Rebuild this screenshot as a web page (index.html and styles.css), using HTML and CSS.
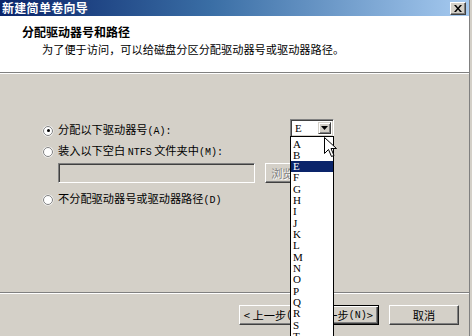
FILE: index.html
```html
<!DOCTYPE html>
<html lang="zh-CN">
<head>
<meta charset="utf-8">
<title>新建简单卷向导</title>
<link rel="stylesheet" href="styles.css">
</head>
<body>
<div class="window">
  <div class="titlebar">
    <span class="title">新建简单卷向导</span>
    <span class="close-btn">
      <svg width="8" height="7" viewBox="0 0 8 7"><path d="M0 0h2l2 2.5L6 0h2L5 3.5 8 7H6L4 4.5 2 7H0l3-3.5z" fill="#000"/></svg>
    </span>
  </div>
  <div class="header">
    <div class="heading">分配驱动器号和路径</div>
    <div class="subtitle">为了便于访问，可以给磁盘分区分配驱动器号或驱动器路径。</div>
  </div>
  <div class="sep"></div>
  <div class="content">
    <div class="options">
      <div class="row">
        <span class="radio checked"></span>
        <span class="label">分配以下驱动器号<span class="latin">(A):</span></span>
        <div class="combo">
          <span class="combo-value">E</span>
          <span class="combo-arrow"><svg width="7" height="4" viewBox="0 0 7 4"><path d="M0 0h7L3.5 4z" fill="#000"/></svg></span>
          <div class="droplist">
            <div class="item">A</div>
            <div class="item">B</div>
            <div class="item selected">E</div>
            <div class="item">F</div>
            <div class="item">G</div>
            <div class="item">H</div>
            <div class="item">I</div>
            <div class="item">J</div>
            <div class="item">K</div>
            <div class="item">L</div>
            <div class="item">M</div>
            <div class="item">N</div>
            <div class="item">O</div>
            <div class="item">P</div>
            <div class="item">Q</div>
            <div class="item">R</div>
            <div class="item">S</div>
            <div class="item">T</div>
          </div>
          <svg class="cursor" width="13" height="22" viewBox="0 0 13 22"><path d="M0.5 0.5v16l4-4 3 7 2.5-1-3-7h5.5z" fill="#fff" stroke="#000" stroke-width="1"/></svg>
        </div>
      </div>
      <div class="row">
        <span class="radio"></span>
        <span class="label">装入以下空白 <span class="latin">NTFS</span> 文件夹中<span class="latin">(M):</span></span>
      </div>
      <div class="field-row">
        <div class="field"></div>
        <div class="btn browse disabled">浏览...</div>
      </div>
      <div class="row row3">
        <span class="radio"></span>
        <span class="label">不分配驱动器号或驱动器路径<span class="latin">(D)</span></span>
      </div>
    </div>
  </div>
  <div class="sep"></div>
  <div class="buttons">
    <div class="btn wide">&lt; 上一步<span class="latin">(B)</span></div>
    <div class="btn wide default">下一步<span class="latin">(N)</span> &gt;</div>
    <div class="btn wide cancel">取消</div>
  </div>
</div>
</body>
</html>
```
FILE: styles.css
```css
html, body {
  margin: 0;
  padding: 0;
}
body {
  width: 472px;
  height: 336px;
  overflow: hidden;
  background: #d4d0c8;
  font-family: "Noto Sans CJK SC", "Liberation Sans", sans-serif;
  font-size: 11px;
  color: #000;
}
.window {
  width: 469px;
  height: 336px;
  display: flex;
  flex-direction: column;
  border-right: 1px solid #808080;
  background: #d4d0c8;
}
.titlebar {
  height: 16px;
  flex: 0 0 16px;
  background: linear-gradient(to right, #0a246a 0%, #3a6ea5 45%, #a6caf0 100%);
  display: flex;
  align-items: center;
  justify-content: space-between;
  padding: 0 3px 0 2px;
}
.title {
  color: #fff;
  font-weight: bold;
  font-size: 12px;
  line-height: 16px;
  letter-spacing: 0.3px;
}
.close-btn {
  width: 14px;
  height: 11px;
  background: #d4d0c8;
  border: 1px solid;
  border-color: #fff #404040 #404040 #fff;
  box-shadow: inset -1px -1px 0 #808080;
  display: flex;
  align-items: center;
  justify-content: center;
}
.header {
  height: 56px;
  flex: 0 0 56px;
  background: #fff;
  box-sizing: border-box;
  padding: 9px 0 0 22px;
}
.heading {
  font-weight: bold;
  font-size: 12px;
  line-height: 14px;
}
.subtitle {
  margin-top: 3px;
  padding-left: 20px;
  font-size: 11.2px;
  line-height: 14px;
}
.sep {
  height: 1px;
  flex: 0 0 1px;
  background: #808080;
  border-bottom: 1px solid #fff;
}
.content {
  flex: 1 1 auto;
  padding-top: 46px;
  padding-left: 43px;
}
.options {
  width: 291px;
  display: flex;
  flex-direction: column;
}
.row {
  height: 21px;
  display: flex;
  align-items: center;
}
.row3 {
  margin-top: 6px;
}
.radio {
  width: 8px;
  height: 8px;
  border-radius: 50%;
  background: #fff;
  border: 1px solid #808080;
  box-shadow: 0 0 0 0.5px #fff;
  margin-right: 5px;
  position: relative;
  flex: 0 0 auto;
}
.radio.checked::after {
  content: "";
  position: absolute;
  left: 2.5px;
  top: 2.5px;
  width: 3px;
  height: 3px;
  border-radius: 50%;
  background: #000;
}
.label {
  font-size: 11.2px;
  line-height: 14px;
  white-space: nowrap;
}
.latin {
  font-family: "Liberation Mono", monospace;
  font-size: 10px;
}
.combo {
  margin-left: auto;
  align-self: flex-start;
  margin-top: -1px;
  width: 44px;
  height: 18px;
  box-sizing: border-box;
  border: 1px solid;
  border-color: #808080 #fff #fff #808080;
  box-shadow: inset 1px 1px 0 #404040, inset -1px -1px 0 #d4d0c8;
  background: #fff;
  position: relative;
  display: flex;
  align-items: center;
  padding: 2px;
}
.combo-value {
  flex: 1;
  font-family: "Liberation Serif", serif;
  font-size: 11px;
  line-height: 12px;
  padding-left: 2px;
}
.combo-arrow {
  width: 13px;
  height: 12px;
  box-sizing: border-box;
  background: #d4d0c8;
  border: 1px solid;
  border-color: #d4d0c8 #404040 #404040 #d4d0c8;
  box-shadow: inset 1px 1px 0 #fff, inset -1px -1px 0 #808080;
  display: flex;
  align-items: center;
  justify-content: center;
}
.droplist {
  position: absolute;
  left: -1px;
  top: 16px;
  width: 44px;
  box-sizing: border-box;
  border: 1px solid #000;
  background: #fff;
  padding-top: 1.5px;
  z-index: 5;
}
.item {
  height: 11.33px;
  line-height: 11.33px;
  overflow: hidden;
  font-family: "Liberation Serif", serif;
  font-size: 11px;
  padding-left: 2px;
}
.item.selected {
  background: #0a246a;
  color: #fff;
}
.cursor {
  position: absolute;
  left: 33px;
  top: 17px;
  z-index: 6;
}
.field-row {
  display: flex;
  align-items: center;
  margin-top: 1px;
  padding-left: 15px;
}
.field {
  width: 197px;
  height: 20px;
  box-sizing: border-box;
  background: #d4d0c8;
  border: 1px solid;
  border-color: #808080 #fff #fff #808080;
  box-shadow: inset 1px 1px 0 #404040, inset -1px -1px 0 #d4d0c8;
}
.btn {
  height: 20px;
  box-sizing: border-box;
  background: #d4d0c8;
  border: 1px solid;
  border-color: #fff #404040 #404040 #fff;
  box-shadow: inset -1px -1px 0 #808080;
  display: flex;
  align-items: center;
  justify-content: center;
  font-size: 11.2px;
  white-space: nowrap;
}
.btn.browse {
  width: 44px;
  margin-left: 10px;
}
.btn.disabled {
  color: #808080;
  text-shadow: 1px 1px 0 #fff;
}
.buttons {
  flex: 0 0 42px;
  display: flex;
  padding: 11px 0 0 239px;
  height: 42px;
  box-sizing: border-box;
}
.btn.wide {
  width: 70px;
}
.btn.default {
  border: 1px solid #000;
  box-shadow: inset 1px 1px 0 #fff, inset -1px -1px 0 #404040, inset -2px -2px 0 #808080;
}
.btn.cancel {
  margin-left: 10px;
}
```
